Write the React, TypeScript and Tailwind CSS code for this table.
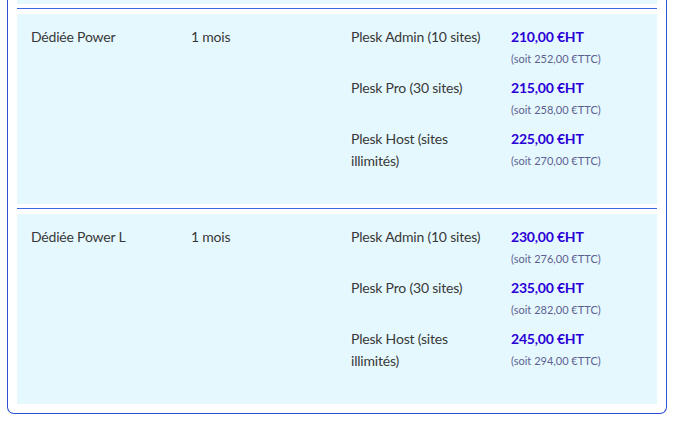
const offers = [
  {
    name: "Dédiée Power",
    duration: "1 mois",
    plans: [
      { label: "Plesk Admin (10 sites)", ht: "210,00", ttc: "252,00" },
      { label: "Plesk Pro (30 sites)", ht: "215,00", ttc: "258,00" },
      { label: "Plesk Host (sites illimités)", ht: "225,00", ttc: "270,00" },
    ],
  },
  {
    name: "Dédiée Power L",
    duration: "1 mois",
    plans: [
      { label: "Plesk Admin (10 sites)", ht: "230,00", ttc: "276,00" },
      { label: "Plesk Pro (30 sites)", ht: "235,00", ttc: "282,00" },
      { label: "Plesk Host (sites illimités)", ht: "245,00", ttc: "294,00" },
    ],
  },
];

export default function App() {
  return (
    <div className="h-[423px] overflow-hidden bg-white font-['Lato',sans-serif] text-[14px] leading-[22px] tracking-[-0.2px] text-[#383838]">
      <div className="ml-[7px] w-[660px] rounded-b-[7px] border border-t-0 border-[#2f4fd8] px-[9px] pb-[9px]">
        {/* fin de la ligne précédente */}
        <div className="h-[4px] bg-[#e5f8fe]" />

        {offers.map((offer) => (
          <div key={offer.name} className="mt-[4px] border-t border-[#3d66e4] pt-[5px]">
            <div className="grid h-[190px] grid-cols-4 bg-[#e5f8fe] pt-[12px]">
              <div className="px-[14px]">{offer.name}</div>
              <div className="px-[14px]">{offer.duration}</div>
              <div className="col-span-2 flex flex-col gap-[7px]">
                {offer.plans.map((plan) => (
                  <div key={plan.label} className="grid grid-cols-2">
                    <div className="pl-[14px] pr-[4px]">{plan.label}</div>
                    <div className="px-[14px]">
                      <div className="font-bold text-[#2a00d6]">{plan.ht} €HT</div>
                      <div className="text-[11px] tracking-normal text-[#5d6190]">(soit {plan.ttc} €TTC)</div>
                    </div>
                  </div>
                ))}
              </div>
            </div>
          </div>
        ))}
      </div>
    </div>
  );
}
